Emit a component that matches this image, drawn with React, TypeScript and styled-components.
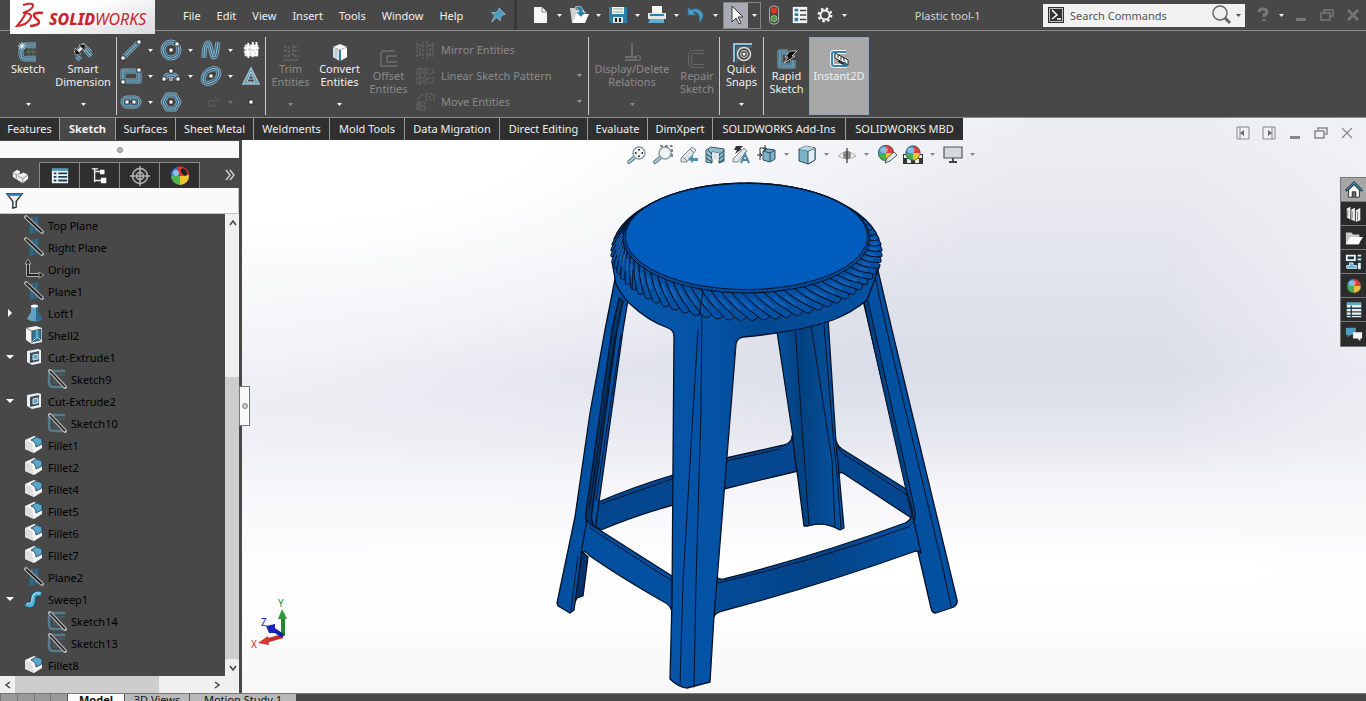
import React from "react";
import styled, { createGlobalStyle, css } from "styled-components";

const color = {
  chrome: "#484848",
  tab: "#2f2f2f",
  line: "#8c8c8c",
  text: "#f0f0f0",
  dim: "#8a8a8a",
  ice: "#8fc3dc",
};

const Global = createGlobalStyle`
  *, *::before, *::after { box-sizing: border-box; }
  body { margin: 0; background: ${color.chrome}; }
  body, button, input { font-family: "Noto Sans", "Open Sans", sans-serif; font-size: 11px; line-height: 13px; }
  button { margin: 0; padding: 0; border: 0; background: none; color: inherit; cursor: default; white-space: nowrap; }
  ul { margin: 0; padding: 0; list-style: none; }
  svg { display: block; flex: none; overflow: visible; }
`;

const Shell = styled.div`
  display: flex;
  flex-direction: column;
  height: 100vh;
  overflow: hidden;
  color: ${color.text};
  background: ${color.chrome};
`;

/* ---------- icon helpers ---------- */

type IconProps = { children: React.ReactNode; w?: number; h?: number; box?: string };
const Icon = ({ children, w = 20, h = 20, box = "0 0 20 20" }: IconProps) => (
  <svg width={w} height={h} viewBox={box} fill="none" aria-hidden="true">
    {children}
  </svg>
);

const Caret = ({ fill = "#f4f4f4" }: { fill?: string }) => (
  <svg width="5" height="3" viewBox="0 0 5 3" aria-hidden="true">
    <path d="M0 0H5L2.500 3Z" fill={fill} />
  </svg>
);

const Dot = ({ x, y }: { x: number; y: number }) => (
  <rect x={x - 2} y={y - 2} width="4" height="4" fill="#fff" stroke="#222" strokeWidth=".8" />
);

const Tube = ({ d }: { d: string }) => (
  <>
    <path d={d} stroke="#8fa9b6" strokeWidth="5" strokeLinejoin="round" />
    <path d={d} stroke="#2f5c77" strokeWidth="3.200" strokeLinejoin="round" />
    <path d={d} stroke="#86bdd8" strokeWidth="1.200" />
  </>
);

const Ball = ({ x = 10, y = 10, r = 8 }: { x?: number; y?: number; r?: number }) => (
  <g transform={`translate(${x} ${y}) scale(${r / 8})`}>
    <path d="M0 0L-8 0A8 8 0 0 1 0 -8Z" fill="#3f8fd6" />
    <path d="M0 0L0 -8A8 8 0 0 1 8 0Z" fill="#d8404a" />
    <path d="M0 0L8 0A8 8 0 0 1 0 8Z" fill="#e8c23a" />
    <path d="M0 0L0 8A8 8 0 0 1 -8 0Z" fill="#45ae58" />
    <ellipse cx="-2" cy="-3" rx="4" ry="3" fill="#fff" opacity=".4" />
    <circle r="7.700" stroke="#39424c" strokeWidth=".6" />
  </g>
);

/* ---------- title bar ---------- */

const TitleBar = styled.header`
  display: flex;
  align-items: center;
  height: 31px;
  flex: none;
  border-bottom: 1px solid ${color.line};
`;

const Logo = styled.div`
  position: relative;
  z-index: 1;
  display: flex;
  align-self: flex-start;
  align-items: center;
  gap: 5px;
  width: 145px;
  height: 34px;
  margin-left: 10px;
  padding-left: 6px;
  flex: none;
  background: linear-gradient(160deg, #fff 40%, #d9dadd);
  color: #c6262c;
`;

const Wordmark = styled.span`
  padding-top: 3px;
  font-size: 16px;
  line-height: 18px;
  font-style: italic;
  white-space: nowrap;
  b { font-weight: 800; }
`;

const MenuBar = styled.nav`
  display: flex;
  align-items: center;
  margin-left: 20px;
`;

const MenuItem = styled.button`
  height: 24px;
  padding: 0 8px;
`;

const PinButton = styled.button`
  display: grid;
  place-items: center;
  width: 32px;
  height: 24px;
  margin-left: 11px;
`;

const QuickBar = styled.div`
  display: flex;
  align-items: center;
  height: 30px;
  padding-left: 11px;
  border-left: 3px solid #3a3a3a;
`;

const ToolButton = styled.button<{ $w?: number; $on?: boolean }>`
  display: grid;
  place-items: center;
  width: ${(p) => p.$w ?? 24}px;
  height: 25px;
  flex: none;
  ${(p) => p.$on && css`background: #a9abb3;`}
`;

const CaretButton = styled.button<{ $w?: number }>`
  display: grid;
  place-items: center;
  width: ${(p) => p.$w ?? 15}px;
  height: 25px;
  flex: none;
`;

const SplitFrame = styled.span`
  display: flex;
  border: 1px solid #80858a;
`;

const DocTitle = styled.h1`
  flex: 1;
  margin: 0;
  font-size: 11px;
  font-weight: 400;
  text-align: center;
  color: #d4d4d4;
`;

const SearchForm = styled.form`
  display: flex;
  align-items: center;
  width: 202px;
  height: 23px;
  padding: 0 2px 0 5px;
  flex: none;
  background: #f1f1f2;
  color: #555;
`;

const SearchInput = styled.input`
  flex: 1;
  min-width: 0;
  height: 21px;
  padding: 0 0 0 6px;
  border: 0;
  outline: 0;
  background: transparent;
  &::placeholder { color: #555; opacity: 1; }
`;

const WindowButtons = styled.div`
  display: flex;
  align-items: center;
  margin-left: 6px;
`;

/* ---------- ribbon ---------- */

const Ribbon = styled.section`
  display: flex;
  height: 87px;
  flex: none;
  padding: 6px 0 2px;
  border-bottom: 1px solid ${color.line};
`;

const Group = styled.div<{ $pad?: string; $last?: boolean }>`
  display: flex;
  padding: ${(p) => p.$pad ?? "0"};
  border-right: ${(p) => (p.$last ? "0" : "1px solid #c9c9c9")};
`;

const BigButton = styled.button<{ $w: number; $low?: boolean; $on?: boolean }>`
  display: flex;
  flex-direction: column;
  align-items: center;
  width: ${(p) => p.$w}px;
  height: 78px;
  padding: ${(p) => (p.$low ? 12 : 5)}px 0 9px;
  text-align: center;
  white-space: pre-line;
  &:disabled { color: ${color.dim}; }
  > svg:last-child:not(:first-child) { margin-top: auto; }
  ${(p) =>
    p.$on &&
    css`
      padding-top: 11px;
      background: #a8a8a8;
      border: 1px solid #8fa6bb;
    `}
`;

const SketchGrid = styled.div`
  display: grid;
  grid-template-columns: 40px 40px 40px 26px;
  grid-template-rows: repeat(3, 26px);
`;

const GridCell = styled.div`
  display: flex;
  align-items: center;
`;

const List = styled.div`
  display: grid;
  grid-template-rows: repeat(3, 26px);
  width: 175px;
`;

const ListButton = styled.button`
  display: flex;
  align-items: center;
  gap: 6px;
  padding: 0 6px 1px 2px;
  text-align: left;
  &:disabled { color: ${color.dim}; }
  span { flex: 1; }
`;

/* ---------- main area ---------- */

const Main = styled.main`
  display: flex;
  flex-direction: column;
  flex: 1;
  min-height: 0;
  background:
    radial-gradient(ellipse 56% 50% at 20% 0%, #fff 35%, rgba(255, 255, 255, 0) 100%),
    radial-gradient(ellipse 45% 60% at 18% 40%, rgba(250, 250, 253, 0.6) 0%, rgba(250, 250, 253, 0) 100%),
    radial-gradient(ellipse 18% 60% at 103% 36%, rgba(248, 248, 251, 0.7) 0%, rgba(248, 248, 251, 0) 100%),
    linear-gradient(#eeeff4 0%, #e4e6ed 22%, #dadde8 44%, #e6e8ef 56%, #f5f5f9 64%, #fff 78%, #fdfdfd 88%, #f7f7f8 100%);
`;

const TabRow = styled.div`
  display: flex;
  height: 22px;
  flex: none;
`;

const CommandTabs = styled.nav`
  display: flex;
  background: ${color.tab};
`;

const CommandTab = styled.button<{ $w: number; $on?: boolean }>`
  width: ${(p) => p.$w}px;
  height: 22px;
  padding-bottom: 2px;
  border-right: 1px solid #9a9a9a;
  &:last-child { border-right: 0; }
  ${(p) => p.$on && css`background: ${color.chrome}; font-weight: 700;`}
`;

const DocButtons = styled.div`
  display: flex;
  height: 29px;
  margin: 0 6px 0 auto;
`;

const DocButton = styled.button`
  display: grid;
  place-items: center;
  width: 26px;
`;

const Body = styled.div`
  display: flex;
  flex: 1;
  min-height: 0;
`;

const SidePanel = styled.aside`
  position: relative;
  display: flex;
  flex-direction: column;
  width: 242px;
  flex: none;
  border-right: 3px solid ${color.chrome};
  background: ${color.chrome};
`;

const DragStrip = styled.div`
  display: grid;
  place-items: center;
  height: 17px;
  margin-top: 1px;
  flex: none;
  background: #fafafa;
`;

const PaneTabs = styled.nav`
  display: flex;
  height: 26px;
  margin-top: 4px;
  flex: none;
`;

const PaneTab = styled.button<{ $on?: boolean }>`
  display: grid;
  place-items: center;
  width: 40px;
  background: ${(p) => (p.$on ? color.chrome : color.tab)};
  border-top: 1px solid ${(p) => (p.$on ? color.chrome : "#8a8a8a")};
  border-right: 1px solid #8a8a8a;
`;

const MoreButton = styled.button`
  margin: 0 4px 0 auto;
`;

const FilterRow = styled.label`
  display: flex;
  align-items: center;
  height: 26px;
  padding-left: 6px;
  flex: none;
  border: solid #c4c4c4;
  border-width: 0 1px 1px 0;
  background: #fafafa;
`;

const FilterInput = styled.input`
  flex: 1;
  min-width: 0;
  border: 0;
  outline: 0;
  background: transparent;
`;

const TreeArea = styled.div`
  display: flex;
  flex: 1;
  min-height: 0;
  overflow: hidden;
`;

const Tree = styled.ul`
  flex: 1;
  overflow: hidden;
  color: #000;
`;

const TreeRow = styled.li<{ $deep?: boolean }>`
  display: flex;
  align-items: center;
  gap: 4px;
  height: 22px;
  padding-left: ${(p) => (p.$deep ? 23 : 0)}px;
`;

const Toggle = styled.button`
  display: grid;
  place-items: center;
  width: 20px;
  height: 20px;
  visibility: ${(p) => (p.disabled ? "hidden" : "visible")};
`;

const ScrollV = styled.div`
  display: flex;
  flex-direction: column;
  width: 14px;
  background: #f0f0f0;
`;

const ScrollH = styled.div`
  display: flex;
  height: 17px;
  flex: none;
  background: #f0f0f0;
`;

const ScrollButton = styled.button`
  display: grid;
  place-items: center;
  width: 15px;
  height: 17px;
  color: #444;
`;

const TrackV = styled.div`
  display: flex;
  flex: 1;
  align-items: flex-end;
  &::after { content: ""; width: 14px; height: 66%; background: #cdcdcd; }
`;

const TrackH = styled.div`
  flex: 1;
  &::after { content: ""; display: block; width: 74%; height: 17px; background: #cdcdcd; }
`;

const PanelHandle = styled.button`
  position: absolute;
  z-index: 1;
  top: 246px;
  right: -11px;
  display: grid;
  place-items: center;
  width: 11px;
  height: 40px;
  border: 1px solid #777;
  background: #fafafa;
`;

const Canvas = styled.section`
  position: relative;
  flex: 1;
  min-width: 0;
`;

const ViewBar = styled.div`
  display: flex;
  justify-content: center;
  height: 30px;
  padding: 2px 5px 0 0;
`;

const ModelView = styled.svg`
  position: absolute;
  left: 28%;
  top: 42px;
`;

const Triad = styled.svg`
  position: absolute;
  left: 8px;
  bottom: 43px;
`;

const TaskPane = styled.nav`
  position: absolute;
  top: 37px;
  right: 0;
  display: flex;
  flex-direction: column;
  border: 1px solid #777;
  border-right: 0;
`;

const TaskButton = styled.button<{ $on?: boolean }>`
  display: grid;
  place-items: center;
  width: 25px;
  height: 24px;
  background: ${(p) => (p.$on ? "#a6a6a6" : "#2b2b2b")};
  border-bottom: 1px solid #777;
  &:last-child { border-bottom: 0; }
`;

const Footer = styled.footer`
  display: flex;
  height: 8px;
  flex: none;
  overflow: hidden;
  border-top: 1px solid #777;
`;

const SheetArrows = styled.div`
  width: 67px;
  display: flex;
  background: #9a9a9a;
  color: #666;
`;

const SheetArrow = styled.button`
  width: 17px;
  height: 20px;
  border-left: 1px solid #777;
`;

const SheetTab = styled.button<{ $w: number; $on?: boolean }>`
  width: ${(p) => p.$w}px;
  height: 20px;
  padding-bottom: 8px;
  line-height: 12px;
  border-left: 1px solid #555;
  color: #111;
  background: ${(p) => (p.$on ? "#fafafa" : "#b9b9b9")};
  font-weight: ${(p) => (p.$on ? 700 : 400)};
`;

/* ---------- ribbon drawings ---------- */

const SketchIcon = (
  <Icon>
    <path d="M8 6H19M8 10H19M8 14H19M11 4V17M15 4V17" stroke="#5d8a72" strokeWidth=".7" />
    <Tube d="M18 3H8Q3 3 3 8V12Q3 17 8 17H18" />
    <path d="M4 0V8M0 4H8M1 1L7 7M7 1L1 7" stroke="#a6dced" strokeWidth="1" />
    <circle cx="4" cy="4" r="1.500" fill="#fff" />
  </Icon>
);
const DimensionIcon = (
  <Icon>
    <path d="M1 10L10 1L19 9" stroke={color.ice} strokeWidth="1" />
    <Tube d="M4 18L7 14M12 7L18 14" />
    <path d="M3 11L11 4" stroke="#f0f0f0" strokeWidth="2.500" />
    <path d="M2 13V6L8 12ZM12 2V9L6 3Z" fill="#111" stroke="#ccc" strokeWidth=".6" />
  </Icon>
);
const TrimIcon = (
  <Icon>
    <path d="M2 18H18M3 14H8V3M12 3V14H18M3 5H8M3 9H8M12 5H17M12 9H17" stroke="#5e5e5e" strokeWidth="2" strokeDasharray="3 1" />
  </Icon>
);
const ConvertIcon = (
  <Icon>
    <path d="M3 5L10 2L17 5V15L10 19L3 15Z" fill="#f5f5f5" />
    <path d="M3 5L10 8V19L3 15Z" fill="#d7dde0" />
    <path d="M10 8L17 5V15L10 19Z" fill="#fff" />
    <path d="M6 7V16" stroke="#8fc3dc" />
    <path d="M10 8V19" stroke="#2c7ea3" strokeWidth="2" />
    <path d="M3 5L10 8L17 5" stroke="#999" strokeWidth=".8" />
  </Icon>
);
const OffsetIcon = (
  <Icon>
    <path d="M16 2H5Q2 2 2 5V17H18M18 7H8V13H18" stroke="#6c6c6c" strokeWidth="1.500" />
  </Icon>
);
const RelationsIcon = (
  <Icon>
    <path d="M10 1V14M3 15H15M3 18H14" stroke="#777" strokeWidth="1.500" />
    <circle cx="16" cy="16" r="2.500" stroke="#777" />
  </Icon>
);
const RepairIcon = (
  <Icon>
    <path d="M17 3H7Q3 3 3 7V13Q3 17 7 17H17" stroke="#666" strokeWidth="4" />
    <path d="M17 3H7Q3 3 3 7V13Q3 17 7 17H17" stroke="#484848" strokeWidth="2" />
  </Icon>
);
const SnapsIcon = (
  <Icon>
    <path d="M1 2H20M2 1V20" stroke="#8fc3dc" strokeWidth="2" />
    <path d="M5 5H20M5 5V20" stroke="#4f86a0" />
    <circle cx="12" cy="12" r="6.500" stroke="#ddd" strokeWidth="1.500" />
    <circle cx="12" cy="12" r="3.500" stroke="#ddd" />
    <circle cx="12" cy="12" r="1.500" fill="#fff" />
  </Icon>
);
const RapidIcon = (
  <Icon>
    <Tube d="M11 3H3V17H16V11" />
    <path d="M13 2H20L15 7H18L7 14L11 8H8Z" fill="#111" stroke="#ddd" strokeWidth=".8" />
  </Icon>
);
const InstantIcon = (
  <Icon>
    <path d="M17 3H5Q3 3 3 5V15Q3 17 5 17H18" stroke="#e9f4fa" strokeWidth="4" />
    <path d="M17 3H5Q3 3 3 5V15Q3 17 5 17H18" stroke="#3b82ab" strokeWidth="2" />
    <path d="M6 4L19 11V16L6 9Z" fill="#fff" stroke="#222" />
    <path d="M9 6V9M12 8V11M15 9V12" stroke="#222" />
    <path d="M9 12L16 16" stroke="#222" strokeWidth="1.500" />
    <path d="M13 17H19L16 12Z" fill="#2c6f95" />
  </Icon>
);

const sketchTools: { name: string; icon: React.ReactNode; menu?: boolean; off?: boolean }[] = [
  { name: "Line", menu: true, icon: <Icon><Tube d="M2 18L18 2" /><Dot x={2} y={18} /><Dot x={18} y={2} /></Icon> },
  { name: "Circle", menu: true, icon: <Icon><Tube d="M10 2A8 8 0 1 0 10 18A8 8 0 1 0 10 2Z" /><Dot x={10} y={10} /><Dot x={16} y={4} /></Icon> },
  { name: "Spline", menu: true, icon: <Icon><Tube d="M3 18C3 10 4 3 7 3S10 17 13 17S16 6 17 2" /></Icon> },
  {
    name: "Sketch Picture",
    icon: (
      <Icon w={18} h={18}>
        <path d="M3 4H18V17H3Z" fill="#eee" />
        <path d="M2 8H19M2 12H18M7 2V19M12 1V18M16 1V17" stroke="#fff" strokeWidth="2" />
        <path d="M4 6L17 15M3 10H18M9 4V17" stroke="#bbb" strokeDasharray="2 2" />
      </Icon>
    ),
  },
  { name: "Rectangle", menu: true, icon: <Icon><Tube d="M2 5H18V15H2Z" /><Dot x={2} y={16} /><Dot x={18} y={4} /></Icon> },
  { name: "Arc", menu: true, icon: <Icon><Tube d="M3 13A8 8 0 0 1 17 13" /><Dot x={3} y={13} /><Dot x={17} y={13} /><Dot x={10} y={5} /><rect x="8" y="11" width="4" height="4" fill="#999" /></Icon> },
  { name: "Ellipse", menu: true, icon: <Icon><g transform="rotate(-40 10 10)"><Tube d="M1 10A9 6 0 1 0 19 10A9 6 0 1 0 1 10Z" /></g><Dot x={10} y={10} /></Icon> },
  {
    name: "Text",
    icon: (
      <Icon>
        <path d="M10 2L18 18H2Z" fill="#5d93ad" stroke="#9fc0ce" strokeWidth="1.500" />
        <path d="M10 6L14 16H6Z" fill="#484848" stroke="#b9d3de" />
        <path d="M7 13H13M8 10H12" stroke="#9fc0ce" />
      </Icon>
    ),
  },
  { name: "Slot", menu: true, icon: <Icon><Tube d="M6 6H14A4 4 0 0 1 14 14H6A4 4 0 0 1 6 6Z" /><Dot x={6} y={10} /><Dot x={13} y={10} /></Icon> },
  { name: "Polygon", icon: <Icon><Tube d="M6 3H14L18 10L14 17H6L2 10Z" /><Dot x={10} y={10} /></Icon> },
  { name: "Fillet", menu: true, off: true, icon: <Icon><path d="M8 9H13V14H8ZM14 5L18 9" stroke="#545454" strokeWidth="2" /></Icon> },
  { name: "Point", icon: <Icon><Dot x={10} y={10} /></Icon> },
];

const entityTools = [
  { name: "Mirror Entities", d: "M2 2V18M5 4V16M8 1V19M12 1V19M15 4V16M18 2V18M2 5H8M12 5H18M2 15H8M12 15H18", menu: false },
  { name: "Linear Sketch Pattern", d: "M2 3H8V8H2ZM12 3H18V8H12ZM2 12H8V17H2ZM12 12H18V17H12ZM10 1V19M5 1V19", menu: true },
  { name: "Move Entities", d: "M2 10H10V18H2ZM11 2H19V8H11ZM3 7L8 2M2 14H10M6 10V18M4 10V18M13 5H17", menu: true },
];

/* ---------- tree data ---------- */

const PlaneIcon = (
  <Icon>
    <path d="M5 3L15 1V17L5 19Z" fill="#315d74" />
    <path d="M8 2V18M12 2V17" stroke="#4c8099" strokeWidth=".8" />
    <path d="M2 2L18 17" stroke="#b4b4b4" strokeWidth="4" strokeLinecap="round" />
    <path d="M2 2L18 17" stroke="#222" strokeWidth="1.800" />
  </Icon>
);
const OriginIcon = (
  <Icon>
    <path d="M4 3V16H17" stroke="#b4b4b4" strokeWidth="4" strokeLinejoin="round" />
    <path d="M4 3V16H17" stroke="#222" strokeWidth="2" />
    <path d="M1 5L4 0L7 5ZM15 13L20 16L15 19Z" fill="#222" stroke="#b4b4b4" strokeWidth=".8" />
  </Icon>
);
const LoftIcon = (
  <Icon>
    <path d="M7 3H14V9L18 16Q11 21 3 16L7 9Z" fill="#5fa3c4" />
    <path d="M12 3V18Q16 18 18 16L14 9V3Z" fill="#2c6c8e" />
    <ellipse cx="10.500" cy="3" rx="3.500" ry="1.500" fill="#fff" />
  </Icon>
);
const ShellIcon = (
  <Icon>
    <path d="M2 3L12 1L18 3V17L8 19L2 15Z" fill="#f2f2f2" />
    <path d="M8 6L17 4V15L8 17Z" fill="#2d7ba0" stroke="#222" strokeWidth=".6" />
    <path d="M8 17L13 12L17 15M13 12V5" stroke="#a8d4e6" />
    <path d="M2 3L8 6V18" stroke="#555" strokeWidth=".7" />
  </Icon>
);
const CutIcon = (
  <Icon>
    <path d="M3 4L14 2L17 3V16L8 18L3 15Z" fill="#e9eff2" />
    <path d="M6 6L15 4V14L6 16Z" fill="#3b4c55" />
    <path d="M9 8L14 7V12L9 13Z" fill="#5fa3c4" stroke="#cfe2ea" />
  </Icon>
);
const SketchNodeIcon = (
  <Icon>
    <path d="M18 2H6Q2 2 2 6V13Q2 18 6 18H18" stroke="#567b8d" strokeWidth="2.500" />
    <path d="M18 6H7V14H18" stroke="#42606e" strokeWidth="1.500" />
    <path d="M3 2L18 18" stroke="#bdbdbd" strokeWidth="4" strokeLinecap="round" />
    <path d="M3 2L18 18" stroke="#2a2222" strokeWidth="1.800" />
  </Icon>
);
const FilletIcon = (
  <Icon>
    <path d="M1 5L10 1L18 4V13L10 18L1 14Z" fill="#f6f6f6" />
    <path d="M1 5L8 8L10 18L1 14Z" fill="#dedede" />
    <path d="M7 5L12 2L18 4V9L12 12Q12 7 7 5Z" fill="#5ba5c8" stroke="#183b4c" strokeWidth=".8" />
  </Icon>
);
const SweepIcon = (
  <Icon>
    <path d="M2 15Q9 19 9 11Q9 3 17 5" stroke="#1e4d66" strokeWidth="6" />
    <path d="M2 15Q9 19 9 11Q9 3 17 5" stroke="#4fb0da" strokeWidth="4" />
    <path d="M3 14Q8 16 8 10Q8 3 16 4" stroke="#b3e3f5" strokeWidth="1" />
  </Icon>
);

type Node = { name: string; icon: React.ReactNode; deep?: boolean; fold?: "open" | "closed" };
const nodes: Node[] = [
  { name: "Top Plane", icon: PlaneIcon },
  { name: "Right Plane", icon: PlaneIcon },
  { name: "Origin", icon: OriginIcon },
  { name: "Plane1", icon: PlaneIcon },
  { name: "Loft1", icon: LoftIcon, fold: "closed" },
  { name: "Shell2", icon: ShellIcon },
  { name: "Cut-Extrude1", icon: CutIcon, fold: "open" },
  { name: "Sketch9", icon: SketchNodeIcon, deep: true },
  { name: "Cut-Extrude2", icon: CutIcon, fold: "open" },
  { name: "Sketch10", icon: SketchNodeIcon, deep: true },
  { name: "Fillet1", icon: FilletIcon },
  { name: "Fillet2", icon: FilletIcon },
  { name: "Fillet4", icon: FilletIcon },
  { name: "Fillet5", icon: FilletIcon },
  { name: "Fillet6", icon: FilletIcon },
  { name: "Fillet7", icon: FilletIcon },
  { name: "Plane2", icon: PlaneIcon },
  { name: "Sweep1", icon: SweepIcon, fold: "open" },
  { name: "Sketch14", icon: SketchNodeIcon, deep: true },
  { name: "Sketch13", icon: SketchNodeIcon, deep: true },
  { name: "Fillet8", icon: FilletIcon },
];

/* ---------- view toolbar ---------- */

const Lens = ({ dashed }: { dashed?: boolean }) => (
  <>
    <path d="M2 17L8 12" stroke="#5e7f8c" strokeWidth="4" strokeLinecap="round" />
    <path d="M2 17L8 12" stroke="#a9cdd8" strokeWidth="2" strokeLinecap="round" />
    <circle cx="12" cy="8" r="6" fill="#eef5f8" stroke="#8d999f" strokeWidth="1.500" />
    {dashed ? (
      <path d="M7 1H19V13" stroke="#222" strokeDasharray="3 2" />
    ) : (
      <path d="M12 4V6M12 10V12M8 8H10M14 8H16M11 5L12 4L13 5M11 11L12 12L13 11M9 7L8 8L9 9M15 7L16 8L15 9" stroke="#333" />
    )}
  </>
);

const viewTools: { name: string; icon: React.ReactNode; menu?: boolean }[] = [
  { name: "Zoom to Fit", icon: <Icon><Lens /></Icon> },
  { name: "Zoom to Area", icon: <Icon><Lens dashed /></Icon> },
  {
    name: "Previous View",
    icon: (
      <Icon>
        <path d="M2 13L13 2L17 5L8 17L2 17Z" fill="#dfe5e8" stroke="#7d878c" />
        <path d="M4 12L8 16M11 4L15 8" stroke="#7d878c" />
        <path d="M9 14L14 10V13H19V16H14V18Z" fill="#4a93b5" />
      </Icon>
    ),
  },
  {
    name: "Section View",
    icon: (
      <Icon>
        <path d="M1 5L6 2L19 4V16L14 18V8L7 7V18L1 17Z" fill="#8dbccd" stroke="#375765" />
        <path d="M1 9L7 13M1 13L7 17M3 5L7 9M14 10L19 6M14 14L19 10M14 18L19 14" stroke="#1f4250" />
        <path d="M7 7L14 8V15L7 14Z" fill="#dbe4e8" />
      </Icon>
    ),
  },
  {
    name: "Dynamic Annotation Views",
    icon: (
      <Icon>
        <path d="M5 1H12L9 4H11L4 9L6 5H3Z" fill="#333" />
        <path d="M2 14L13 3L16 6L7 17L2 17Z" fill="#dfe5e8" stroke="#7d878c" />
        <path d="M10 18L14 9L18 18M12 15H17" stroke="#4a86a2" strokeWidth="2" />
      </Icon>
    ),
  },
  {
    name: "View Orientation",
    menu: true,
    icon: (
      <Icon>
        <path d="M6 6L11 4L18 5V14L13 17L6 15Z" fill="#7db1c7" stroke="#2d5161" />
        <path d="M6 6L13 8V17M13 8L18 5" stroke="#2d5161" />
        <path d="M8 0V4M6 3L8 5L10 3M0 10H4M3 8L5 10L3 12M3 15V3H9" stroke="#333" />
      </Icon>
    ),
  },
  {
    name: "Display Style",
    menu: true,
    icon: (
      <Icon>
        <path d="M2 4L9 1L18 3V15L11 19L2 16Z" fill="#7db1c7" stroke="#2d5161" />
        <path d="M11 6L18 3V15L11 19Z" fill="#e2edf1" stroke="#2d5161" />
        <path d="M2 4L11 6L18 3" stroke="#2d5161" />
        <path d="M2 4L9 1L18 3L11 6Z" fill="#b7d6e2" />
      </Icon>
    ),
  },
  {
    name: "Hide/Show Items",
    menu: true,
    icon: (
      <Icon>
        <path d="M1 11Q10 2 19 11Q10 17 1 11Z" fill="#eee" stroke="#aaa" />
        <circle cx="10" cy="10" r="4" fill="#888" />
        <path d="M10 3V18" stroke="#333" strokeWidth="1.200" />
      </Icon>
    ),
  },
  {
    name: "Edit Appearance",
    icon: (
      <Icon>
        <Ball x={9} y={8} />
        <path d="M8 18L10 13L17 7L20 10L13 16Z" fill="#dfe9ee" stroke="#333" strokeWidth=".8" />
      </Icon>
    ),
  },
  {
    name: "Apply Scene",
    menu: true,
    icon: (
      <Icon>
        <path d="M0 9H20V19H0Z" fill="#333" />
        <path d="M1 10H4V13H1ZM16 10H19V13H16ZM4 14H8V18H4ZM12 14H16V18H12Z" fill="#eee" />
        <Ball y={8} x={10} r={7.5} />
      </Icon>
    ),
  },
  {
    name: "View Settings",
    menu: true,
    icon: (
      <Icon>
        <path d="M1 2H19V13H1Z" fill="#d5d8dc" stroke="#555" strokeWidth="1.200" />
        <path d="M10 13V17M6 17H14" stroke="#444" strokeWidth="1.800" />
      </Icon>
    ),
  },
];

/* ---------- stool model ---------- */

const polar = (cx: number, cy: number, rx: number, ry: number, deg: number) => {
  const a = (deg * Math.PI) / 180;
  return [cx + rx * Math.cos(a), cy + ry * Math.sin(a)] as const;
};
const pt = (p: readonly [number, number]) => `${p[0].toFixed(1)} ${p[1].toFixed(1)}`;

// Ellipse part-way between the seat's edge (k = 0) and the rim's outer edge (k = 1).
const ring = (k: number, deg: number) => polar(746.5, 238 + 13 * k, 122 + 12 * k, 55 + 11 * k, deg);

const STRANDS = 72;
const STEP = 360 / STRANDS;
const TWIST = 12;
const strands = Array.from({ length: STRANDS }, (_, i) => {
  const t = 262 - i * STEP;
  const bend = (offset: number) => pt(ring(0.5, t - TWIST * 0.4 + offset));
  const bump = ring(1.3, t - TWIST + STEP / 2);
  const mid = t + STEP * 0.55;
  return {
    deg: t,
    body: `M${pt(ring(0, t))} Q${bend(0)} ${pt(ring(1, t - TWIST))} Q${pt(bump)} ${pt(ring(1, t - TWIST + STEP))} Q${bend(STEP)} ${pt(ring(0, t + STEP))}Z`,
    shine: `M${pt(ring(0.3, mid - TWIST * 0.25))} L${pt(ring(0.65, mid - TWIST * 0.57))}`,
  };
});

const Stool = () => (
  <ModelView width="402" height="510" viewBox="557 182 402 510" role="img" aria-label="Plastic stool model">
    <defs>
      <linearGradient id="legFront" x1="0" x2="1">
        <stop offset="0" stopColor="#0556ad" />
        <stop offset=".4" stopColor="#0452a4" />
        <stop offset=".55" stopColor="#03488f" />
        <stop offset="1" stopColor="#0452a4" />
      </linearGradient>
      <linearGradient id="legBack" x1="0" x2="1">
        <stop offset="0" stopColor="#04529f" />
        <stop offset=".35" stopColor="#034180" />
        <stop offset="1" stopColor="#0454a4" />
      </linearGradient>
      <linearGradient id="railFront" x1="0" x2="1">
        <stop offset="0" stopColor="#044c98" />
        <stop offset=".5" stopColor="#034386" />
        <stop offset="1" stopColor="#0452a4" />
      </linearGradient>
    </defs>
    <g stroke="#031229" strokeWidth="1.300" strokeLinejoin="round" strokeLinecap="round" fill="#0450a0">
      {/* rear leg and its two rails */}
      <path d="M598 502Q636 486 673 475L726 458L784 445Q792 443 792 436L798 471Q760 480 724 489L673 505Q634 516 601 530L588 521Z" fill="#04478e" />
      <path d="M835 436Q836 445 842 449L906 489L913 519L846 475Q840 470 838 475Z" fill="#04478e" />
      <path d="M837 446L842 453L907 495" fill="none" strokeWidth="1" />
      <path d="M776 325L828 318L836 443L839 473L844 528L840 530Q824 521 808 526L804 526L797 471Q795 462 793 437Z" fill="url(#legBack)" />
      <path d="M795 325L804 455L809 525M811 325L832 460L835 526M824 325L834 446L837 474L841 528" fill="none" strokeWidth="1" />
      <path d="M727 461L780 449M601 504L672 479" fill="none" strokeWidth="1" />

      {/* left leg */}
      <path d="M582 551L588 557L583 596L577 598L574 604Z" fill="#033368" />
      <path d="M616 274L605 330L590 413L575 517L557 603L558 606L570 613L574 610L582 551Q590 548 595 530L599 502L623 330L628 300L640 296Z" />
      <path d="M619 298L612 330L586 512Q584 522 590 529L597 531Q590 522 592 512L617 330L623 301Z" fill="#023468" />
      <path d="M615 335L589 510M621 335L596 500" fill="none" strokeWidth="1" />
      <path d="M578 556L571 610" fill="none" strokeWidth="1" />

      {/* right leg */}
      <path d="M876 262L892 330L957 600Q958 604 954 607L936 613Q932 613 931 608L918 552L905 530Q915 525 911 505L870 330L863 300Z" />
      <path d="M864 301L870 330L906 490L912 508Q914 516 907 522L912 524Q917 518 914 506L878 345L868 301Z" fill="#02417f" strokeWidth="1" />
      <path d="M874 272L889 340L941 560L951 606" fill="none" strokeWidth="1" />

      {/* front rails */}
      <path d="M587 520Q589 524 598 529L672 576V611Q670 605 664 602Q620 577 590 556Q584 549 581 553Z" />
      <path d="M589 527L596 532L672 581" fill="none" strokeWidth="1" />
      <path d="M716 574Q716 580 724 579Q818 555 905 523Q912 520 912 513L921 553Q918 550 913 552Q818 586 722 611Q715 613 714 617Z" fill="url(#railFront)" />
      <path d="M718 583Q818 560 908 527Q913 525 915 518" fill="none" strokeWidth="1" />

      {/* apron and front leg */}
      <path d="M612 262L616 284Q622 296 629 303Q648 321 668 328Q674 330 674 337L673 463L672 600L670 679Q678 687 687 688L710 682L714 616L717 581L736 344Q737 338 743 337Q798 332 833 320Q853 312 867 300L880 265Z" fill="url(#legFront)" />
      <path d="M702 300L701 410L696 583L694 687M698 330L693 413L683 583L680 685" fill="none" strokeWidth="1" />

      {/* twisted rim */}
      <ellipse cx="746.500" cy="250" rx="134" ry="66" fill="#04499a" />
      <g strokeWidth="1" fill="#0450a2">
        {strands.map((s) => (
          <path key={s.deg} d={s.body} />
        ))}
      </g>
      <g stroke="#1f6cc0" strokeWidth="3" opacity=".55">
        {strands.map((s) => (s.deg > 190 || s.deg < -5 ? null : <path key={s.deg} d={s.shine} />))}
      </g>
      <path d="M703 291L699 316M633 270L632 289" fill="none" strokeWidth="1" />

      {/* seat */}
      <ellipse cx="746.500" cy="238" rx="123" ry="55" fill="#034a96" strokeWidth="1" />
      <ellipse cx="746.500" cy="236.500" rx="121" ry="53" fill="#005dbd" strokeWidth="1" />
    </g>
  </ModelView>
);

/* ---------- task pane ---------- */

const taskItems: { name: string; icon: React.ReactNode }[] = [
  { name: "Home", icon: <><path d="M4 10V18H16V10L10 4Z" fill="#fff" stroke="#222" /><path d="M1 11L10 2L19 11" stroke="#1d4252" strokeWidth="3" /><path d="M2 10L10 2L18 10" stroke="#5fb3ce" /><path d="M8 18V12H12V18" stroke="#222" fill="#666" /></> },
  { name: "Design Library", icon: <><path d="M2 4L6 2V16L2 14ZM7 5L11 3V18L7 16ZM12 6L17 3V17L12 19Z" fill="#eee" /><path d="M3 6V13M8 7V15M14 7V17" stroke="#777" /></> },
  { name: "File Explorer", icon: <><path d="M1 17V4H7L9 6H16V17Z" fill="#c9c9c9" /><path d="M1 17L6 9H20L15 17Z" fill="#fff" /></> },
  { name: "View Palette", icon: <><path d="M1 2H19V18H1Z" fill="#20323b" /><path d="M2 3H11V8H2ZM14 3H18M14 7H18" stroke="#e9f4f8" strokeWidth="2" /><path d="M2 17V14H5V11H9V14H13V17Z" fill="#5fb0d2" stroke="#e9f4f8" /><path d="M16 11V18" stroke="#e9f4f8" strokeWidth="3" /></> },
  { name: "Appearances", icon: <Ball r={8} /> },
  { name: "Custom Properties", icon: <><path d="M2 2H18V18H2Z" fill="#e8f0f3" /><path d="M2 3H18" stroke="#5fa8c6" strokeWidth="3" /><path d="M2 8H18M2 12H18M2 16H18M7 5V18" stroke="#24414e" strokeWidth="1.500" /></> },
  { name: "Forum", icon: <><path d="M1 3H12V11H6L3 14V11H1Z" fill="#4f9bc0" /><path d="M9 8H19V15H17V18L14 15H9Z" fill="#f3f3f3" /></> },
];

const WindowGlyph = ({ kind, ink }: { kind: "min" | "restore" | "close"; ink: string }) => (
  <Icon w={14} h={14} box="0 0 14 14">
    {kind === "min" && <path d="M2 11.500H12" stroke={ink} strokeWidth="3" />}
    {kind === "restore" && <path d="M4 5V2H13V8H10M1 5H10V12H1Z" stroke={ink} strokeWidth="1.500" />}
    {kind === "close" && <path d="M2 2L12 12M12 2L2 12" stroke={ink} strokeWidth={ink === "#777" ? 2.5 : 1.2} />}
  </Icon>
);

const tabs: [string, number][] = [
  ["Features", 60], ["Sketch", 56], ["Surfaces", 60], ["Sheet Metal", 78], ["Weldments", 76], ["Mold Tools", 75],
  ["Data Migration", 95], ["Direct Editing", 88], ["Evaluate", 60], ["DimXpert", 65], ["SOLIDWORKS Add-Ins", 133], ["SOLIDWORKS MBD", 117],
];

const quickTools: { name: string; icon: React.ReactNode }[] = [
  { name: "New", icon: <Icon><path d="M4 2H12L17 7V18H4Z" fill="#f6f6f6" /><path d="M12 2V7H17" stroke="#888" /></Icon> },
  { name: "Open", icon: <Icon><path d="M1 3H6L8 5H15V18H3Z" fill="#d0d0d0" /><path d="M3 18L7 9H20L16 18Z" fill="#fff" /><path d="M6 2Q14 -1 14 7H17L12 12L7 7H10Q10 4 6 2Z" fill="#2d7fa6" stroke="#d6ecf5" strokeWidth=".6" /></Icon> },
  { name: "Save", icon: <Icon><path d="M1 2H19V18H3L1 16Z" fill="#2f7ea6" /><path d="M4 2H16V9H4Z" fill="#f4f4f4" /><path d="M5 4H15M5 7H15" stroke="#8ea4ae" /><path d="M5 12H15V18H5Z" fill="#d8e6ec" /><path d="M8 13V17M12 13V17" stroke="#222" strokeWidth="2" /></Icon> },
  { name: "Print", icon: <Icon><path d="M5 1H15V8H5Z" fill="#f8f8f8" /><path d="M1 8H19V14H1Z" fill="#e4e4e4" /><path d="M3 10H17" stroke="#2f7ea6" strokeWidth="2" /><path d="M3 14H17V18H1Z" fill="#65acc9" /></Icon> },
  { name: "Undo", icon: <Icon><path d="M2 2V10H10L7 7Q15 6 13 18Q20 11 15 6Q10 2 5 5Z" fill="#4e9cc1" stroke="#276a8c" strokeWidth=".8" /></Icon> },
];

const App = () => (
  <Shell>
    <Global />
    <TitleBar>
      <Logo>
        <svg width="28" height="28" viewBox="0 0 28 28" fill="none" aria-hidden="true">
          <path d="M7 2Q18 -1 17 3Q16 7 7 10Q18 10 14 16Q11 22 1 23Q7 16 10 10" stroke="#cf262c" strokeWidth="2" />
          <path d="M27 10Q17 9 18 13Q19 15 22 17Q26 22 14 23" stroke="#cf262c" strokeWidth="2.500" />
        </svg>
        <Wordmark><b>SOLID</b>WORKS</Wordmark>
      </Logo>
      <MenuBar aria-label="Menu">
        {["File", "Edit", "View", "Insert", "Tools", "Window", "Help"].map((m) => (
          <MenuItem key={m}>{m}</MenuItem>
        ))}
      </MenuBar>
      <PinButton aria-label="Pin menu">
        <Icon w={16} h={16}>
          <path d="M11 1L19 9L16 10L13 13L13 17L8 13L2 19L6 11L2 7L7 7L11 4Z" fill="#4c9cc4" stroke="#a9d3e6" strokeWidth=".8" />
        </Icon>
      </PinButton>
      <QuickBar>
        {quickTools.map((t) => (
          <React.Fragment key={t.name}>
            <ToolButton aria-label={t.name}>{t.icon}</ToolButton>
            <CaretButton aria-label={`${t.name} options`}><Caret /></CaretButton>
          </React.Fragment>
        ))}
        <SplitFrame>
          <ToolButton aria-label="Select" $on>
            <Icon><path d="M6 1V17L10 13L13 19L15 18L12 12H17Z" fill="#fff" stroke="#333" /></Icon>
          </ToolButton>
          <CaretButton $w={12} aria-label="Select options"><Caret /></CaretButton>
        </SplitFrame>
        <ToolButton $w={26} aria-label="Rebuild">
          <Icon w={18} h={18}>
            <rect x="5" y="0" width="10" height="20" rx="4" fill="#444" stroke="#bbb" />
            <circle cx="10" cy="5" r="3.500" fill="#d63a2c" />
            <circle cx="10" cy="14" r="3.500" fill="#4f9a4d" stroke="#cde8cc" strokeWidth=".6" />
          </Icon>
        </ToolButton>
        <ToolButton $w={26} aria-label="File properties">
          <Icon w={18} h={18}>
            <path d="M2 1H18V19H2Z" fill="#f4f4f4" />
            <path d="M4 3H8V6H4ZM4 8H8V11H4ZM4 13H8V17H4Z" fill="#2f7ea6" />
            <path d="M10 5H17M10 10H17M10 15H17" stroke="#444" strokeWidth="1.500" />
          </Icon>
        </ToolButton>
        <ToolButton aria-label="Options">
          <Icon w={18} h={18}>
            <circle cx="10" cy="10" r="7" stroke="#f6f6f6" strokeWidth="2.500" strokeDasharray="2.750 2.750" />
            <circle cx="10" cy="10" r="5" stroke="#f6f6f6" strokeWidth="2" />
          </Icon>
        </ToolButton>
        <CaretButton aria-label="Options menu"><Caret /></CaretButton>
      </QuickBar>
      <DocTitle>Plastic tool-1</DocTitle>
      <SearchForm onSubmit={(e) => e.preventDefault()}>
        <Icon w={16} h={16} box="0 0 16 16">
          <path d="M0 0H16V16H0Z" fill="#333" />
          <path d="M1.500 1.500H14.500V14.500H1.500Z" stroke="#fff" strokeWidth=".7" />
          <path d="M4 3L9 8L4 12M9 12H13" stroke="#fff" strokeWidth="1.500" />
        </Icon>
        <SearchInput aria-label="Search Commands" placeholder="Search Commands" />
        <ToolButton aria-label="Search">
          <Icon><circle cx="9" cy="8" r="7" stroke="#666" strokeWidth="1.500" /><path d="M14 13L19 18" stroke="#666" strokeWidth="3" /></Icon>
        </ToolButton>
        <CaretButton $w={10} aria-label="Search options"><Caret fill="#555" /></CaretButton>
      </SearchForm>
      <WindowButtons>
        <ToolButton aria-label="Help">
          <Icon w={14} h={14} box="0 0 14 14">
            <path d="M3 4Q3 1 7 1Q11 1 11 4Q11 6 8 7V9M8 11V13" stroke="#777" strokeWidth="3" />
          </Icon>
        </ToolButton>
        <CaretButton $w={13} aria-label="Help options"><Caret /></CaretButton>
        <ToolButton $w={26} aria-label="Minimize"><WindowGlyph kind="min" ink="#777" /></ToolButton>
        <ToolButton $w={26} aria-label="Restore"><WindowGlyph kind="restore" ink="#777" /></ToolButton>
        <ToolButton $w={26} aria-label="Close"><WindowGlyph kind="close" ink="#777" /></ToolButton>
      </WindowButtons>
    </TitleBar>

    <Ribbon>
      <Group $pad="0 6px 0 0">
        <BigButton $w={56}>{SketchIcon}Sketch<Caret /></BigButton>
        <BigButton $w={54}>{DimensionIcon}{"Smart\nDimension"}<Caret /></BigButton>
      </Group>
      <Group $pad="0 0 0 2px">
        <SketchGrid>
          {sketchTools.map((t) => (
            <GridCell key={t.name}>
              <ToolButton aria-label={t.name} disabled={t.off}>{t.icon}</ToolButton>
              {t.menu && <CaretButton aria-label={`${t.name} options`} disabled={t.off}><Caret fill={t.off ? "#777" : undefined} /></CaretButton>}
            </GridCell>
          ))}
        </SketchGrid>
      </Group>
      <Group>
        <BigButton $w={49} disabled>{TrimIcon}{"Trim\nEntities"}<Caret fill="#888" /></BigButton>
        <BigButton $w={49}>{ConvertIcon}{"Convert\nEntities"}<Caret /></BigButton>
        <BigButton $w={49} $low disabled>{OffsetIcon}{"Offset\nEntities"}</BigButton>
        <List>
          {entityTools.map((t) => (
            <ListButton key={t.name} disabled>
              <Icon><path d={t.d} stroke="#666" strokeWidth="1.200" strokeDasharray="3 1" /></Icon>
              <span>{t.name}</span>
              {t.menu && <Caret fill="#999" />}
            </ListButton>
          ))}
        </List>
      </Group>
      <Group>
        <BigButton $w={86} disabled>{RelationsIcon}{"Display/Delete\nRelations"}<Caret fill="#888" /></BigButton>
        <BigButton $w={44} $low disabled>{RepairIcon}{"Repair\nSketch"}</BigButton>
      </Group>
      <Group>
        <BigButton $w={43}>{SnapsIcon}{"Quick\nSnaps"}<Caret /></BigButton>
      </Group>
      <Group $last>
        <BigButton $w={45} $low>{RapidIcon}{"Rapid\nSketch"}</BigButton>
        <BigButton $w={60} $low $on>{InstantIcon}Instant2D</BigButton>
      </Group>
    </Ribbon>

    <Main>
      <TabRow>
        <CommandTabs>
          {tabs.map(([name, w]) => (
            <CommandTab key={name} $w={w} $on={name === "Sketch"}>{name}</CommandTab>
          ))}
        </CommandTabs>
        <DocButtons>
          <DocButton aria-label="Collapse left"><Icon w={14} h={14} box="0 0 14 14"><path d="M1 1H13V13H1ZM4 1V13" stroke="#888" /><path d="M4 7L8 4V10Z" fill="#666" /></Icon></DocButton>
          <DocButton aria-label="Collapse right"><Icon w={14} h={14} box="0 0 14 14"><path d="M1 1H13V13H1ZM10 1V13" stroke="#888" /><path d="M10 7L6 4V10Z" fill="#666" /></Icon></DocButton>
          <DocButton aria-label="Minimize document"><WindowGlyph kind="min" ink="#888" /></DocButton>
          <DocButton aria-label="Restore document"><WindowGlyph kind="restore" ink="#888" /></DocButton>
          <DocButton aria-label="Close document"><WindowGlyph kind="close" ink="#888" /></DocButton>
        </DocButtons>
      </TabRow>

      <Body>
        <SidePanel>
          <DragStrip>
            <Icon w={6} h={6} box="0 0 6 6"><circle cx="3" cy="3" r="2.500" fill="#bbb" stroke="#888" /></Icon>
          </DragStrip>
          <PaneTabs>
            <PaneTab $on aria-label="Feature tree">
              <Icon w={18} h={18}><path d="M2 6L7 3L10 5V8L14 6L19 9V13L13 18L2 11Z" fill="#eee" /><path d="M2 6L6 9L10 7M6 9V13M13 18V13L19 9M13 13L8 10" stroke="#888" /></Icon>
            </PaneTab>
            <PaneTab aria-label="Properties">
              <Icon w={18} h={18}><path d="M1 2H19V18H1Z" fill="#f2f7f9" /><path d="M1 3H19" stroke="#4f9bc0" strokeWidth="3" /><path d="M8 7H18M8 11H18M8 15H18M3 7H6M3 11H6M3 15H6" stroke="#1c4254" strokeWidth="2" /></Icon>
            </PaneTab>
            <PaneTab aria-label="Configurations">
              <Icon w={18} h={18}><path d="M4 1V17M4 5H12M4 15H12M1 2H8" stroke="#eee" strokeWidth="1.500" /><path d="M10 3H15V8H10ZM11 12H17V18H11Z" fill="#fff" /></Icon>
            </PaneTab>
            <PaneTab aria-label="Dimensions">
              <Icon><circle cx="10" cy="10" r="7.500" stroke="#b5b5b5" strokeWidth="1.500" /><circle cx="10" cy="10" r="3.500" stroke="#b5b5b5" strokeWidth="1.500" /><path d="M10 0V20M0 10H20" stroke="#b5b5b5" strokeWidth="1.500" /></Icon>
            </PaneTab>
            <PaneTab aria-label="Display">
              <Icon>
                <path d="M10 10L1 10A9 9 0 0 1 7 1Z" fill="#2d7bd0" /><path d="M10 10L7 1A9 9 0 0 1 19 9Z" fill="#e0342e" />
                <path d="M10 10L19 9A9 9 0 0 1 10 19Z" fill="#f1c52f" /><path d="M10 10L10 19A9 9 0 0 1 1 10Z" fill="#52b353" />
                <ellipse cx="14" cy="6" rx="2.500" ry="4" fill="#222" transform="rotate(-35 14 6)" /><circle cx="6" cy="7" r="3" fill="#fff" opacity=".5" />
              </Icon>
            </PaneTab>
            <MoreButton aria-label="More tabs">
              <Icon w={10} h={14} box="0 0 10 14"><path d="M1 2L5 7L1 12M5 2L9 7L5 12" stroke="#ccc" strokeWidth="1.500" /></Icon>
            </MoreButton>
          </PaneTabs>
          <FilterRow>
            <Icon w={17} h={17}><path d="M1 2H19L12 11V18L8 19V11Z" fill="#e5eef2" stroke="#222" strokeWidth="1.500" /><path d="M1 3H19" stroke="#2f7ea6" strokeWidth="3" /></Icon>
            <FilterInput aria-label="Filter tree" />
          </FilterRow>
          <TreeArea>
            <Tree>
              {nodes.map((n) => (
                <TreeRow key={n.name} $deep={n.deep}>
                  <Toggle disabled={!n.fold} aria-label={`Toggle ${n.name}`}>
                    <Icon w={8} h={8} box="0 0 8 8"><path d={n.fold === "closed" ? "M2 0L6 4L2 8Z" : "M0 2H8L4 6Z"} fill="#fff" /></Icon>
                  </Toggle>
                  {n.icon}
                  <span>{n.name}</span>
                </TreeRow>
              ))}
            </Tree>
            <ScrollV>
              <ScrollButton aria-label="Scroll up"><Icon w={8} h={8} box="0 0 8 8"><path d="M1 6L4 2L7 6" stroke="currentColor" strokeWidth="1.500" /></Icon></ScrollButton>
              <TrackV />
              <ScrollButton aria-label="Scroll down"><Icon w={8} h={8} box="0 0 8 8"><path d="M1 2L4 6L7 2" stroke="currentColor" strokeWidth="1.500" /></Icon></ScrollButton>
            </ScrollV>
          </TreeArea>
          <ScrollH>
            <ScrollButton aria-label="Scroll left"><Icon w={8} h={8} box="0 0 8 8"><path d="M6 1L2 4L6 7" stroke="currentColor" strokeWidth="1.500" /></Icon></ScrollButton>
            <TrackH />
            <ScrollButton aria-label="Scroll right"><Icon w={8} h={8} box="0 0 8 8"><path d="M2 1L6 4L2 7" stroke="currentColor" strokeWidth="1.500" /></Icon></ScrollButton>
            <ScrollButton as="span" />
          </ScrollH>
          <PanelHandle aria-label="Resize panel">
            <Icon w={6} h={6} box="0 0 6 6"><circle cx="3" cy="3" r="2.500" fill="#ccc" stroke="#888" /></Icon>
          </PanelHandle>
        </SidePanel>

        <Canvas>
          <ViewBar>
            {viewTools.map((t) => (
              <React.Fragment key={t.name}>
                <ToolButton $w={26} aria-label={t.name}>{t.icon}</ToolButton>
                {t.menu && <CaretButton $w={14} aria-label={`${t.name} options`}><Caret fill="#888" /></CaretButton>}
              </React.Fragment>
            ))}
          </ViewBar>
          <Stool />
          <Triad width="36" height="54" viewBox="250 596 36 54" aria-hidden="true">
            <path d="M283 636V614" stroke="#1f8a2c" strokeWidth="4" />
            <path d="M278 619L282 609L287 619Z" fill="#2f9a3a" />
            <path d="M283 636L265 641" stroke="#c92a2a" strokeWidth="4" />
            <path d="M268 636L258 643L269 645Z" fill="#d83434" />
            <path d="M283 636L274 630" stroke="#1722a8" strokeWidth="4" />
            <path d="M266 626L275 624L275 633L269 633Z" fill="#1a24b5" />
            <g fontFamily="Noto Sans, sans-serif" fontSize="10">
              <text x="278" y="607" fill="#2a8f35">Y</text>
              <text x="261" y="626" fill="#1a24b5">Z</text>
              <text x="251" y="648" fill="#c92a2a">X</text>
            </g>
          </Triad>
          <TaskPane aria-label="Task pane">
            {taskItems.map((t, i) => (
              <TaskButton key={t.name} $on={i === 0} aria-label={t.name}><Icon w={18} h={18}>{t.icon}</Icon></TaskButton>
            ))}
          </TaskPane>
        </Canvas>
      </Body>
    </Main>

    <Footer>
      <SheetArrows>
        {["First", "Previous", "Next", "Last"].map((n) => (
          <SheetArrow key={n} aria-label={n} />
        ))}
      </SheetArrows>
      <SheetTab $w={57} $on>Model</SheetTab>
      <SheetTab $w={65}>3D Views</SheetTab>
      <SheetTab $w={107}>Motion Study 1</SheetTab>
    </Footer>
  </Shell>
);

export default App;
